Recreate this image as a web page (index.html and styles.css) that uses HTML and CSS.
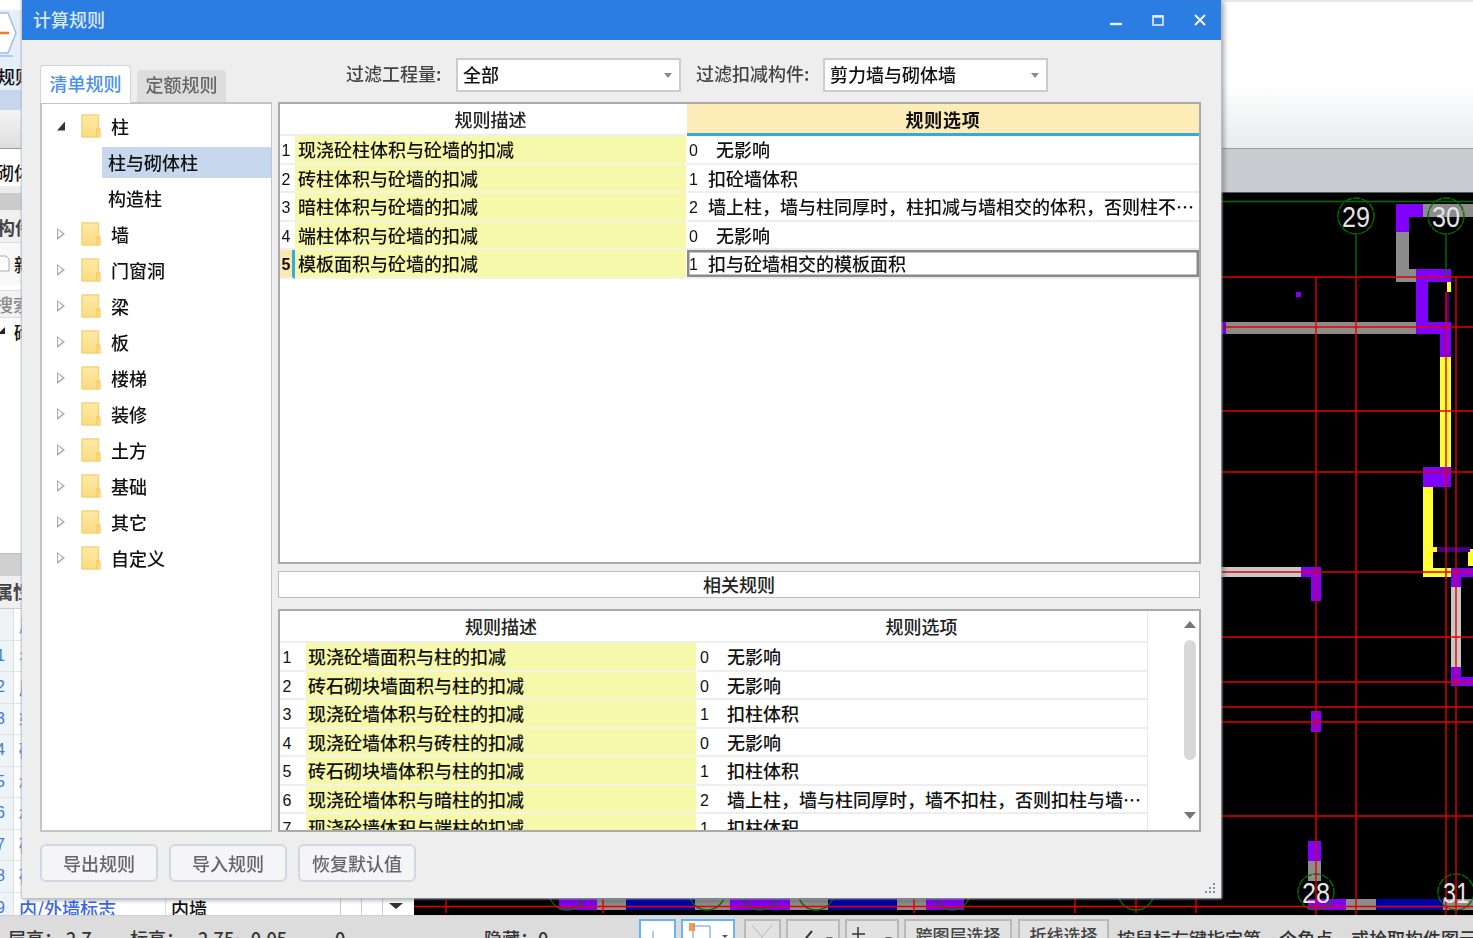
FILE: index.html
```html
<!DOCTYPE html>
<html lang="zh-CN">
<head>
<meta charset="utf-8">
<title>计算规则</title>
<link rel="stylesheet" href="styles.css">
</head>
<body>
<div class="app">
  <header class="ribbon">
    <div class="rb-left">
      <div class="rb-icon">
        <svg width="22" height="48" viewBox="0 0 22 48"><path d="M-6 3H8L16 23L8 43H-6Z" fill="#fff" stroke="#9cc0e8" stroke-width="1.5"/><path d="M0 23H9" stroke="#f07a2a" stroke-width="2.5"/><path d="M0 46H13" stroke="#9cc0e8" stroke-width="1.5"/></svg>
      </div>
      <div class="rb-label">规则</div>
      <div class="rb-sel"></div>
      <div class="rb-grad"></div>
    </div>
    <div class="rb-right"></div>
  </header>
  <div class="workspace">
    <aside class="leftpane">
      <div class="lp-name">砌体墙</div>
      <div class="lp-band"></div>
      <div class="lp-title">构件列表</div>
      <div class="lp-tool"><svg width="10" height="18" viewBox="0 0 10 18"><path d="M-4 1H6L9 4V16H-4Z" fill="#fff" stroke="#aaa"/></svg><span>新建</span></div>
      <div class="lp-search">搜索构件</div>
      <div class="lp-tree"><i class="lp-tri"></i><span>砌体墙</span></div>
      <div class="lp-band2"></div>
      <div class="lp-title2">属性列表</div>
      <div class="lp-table">
        <div class="lp-row lp-head"><b></b><span>属性名称</span><em>属性值</em></div>
        <div class="lp-row"><b>1</b><span>名称</span><em>QTQ-1</em></div>
        <div class="lp-row"><b>2</b><span>厚度(mm)</span><em>200</em></div>
        <div class="lp-row"><b>3</b><span>轴线距左墙皮距离</span><em>(100)</em></div>
        <div class="lp-row"><b>4</b><span>砌体通长筋</span><em></em></div>
        <div class="lp-row"><b>5</b><span>横向短筋</span><em></em></div>
        <div class="lp-row"><b>6</b><span>材质</span><em>砖</em></div>
        <div class="lp-row"><b>7</b><span>砂浆等级</span><em></em></div>
        <div class="lp-row"><b>8</b><span>砂浆类型</span><em></em></div>
        <div class="lp-row lp-last"><b>9</b><span>内/外墙标志</span><em>内墙</em><u></u><u></u><u class="lp-arrow"></u></div>
      </div>
    </aside>
    <main class="stage">
      <div class="band"></div>
      <svg class="cad" width="1059" height="722" viewBox="414 193 1059 722">
        <rect x="414" y="193" width="1059" height="722" fill="#000"/>
        <g fill="#8c8c8c">
          <rect x="1423" y="204" width="50" height="13"/><rect x="1396" y="232" width="13" height="50"/><rect x="1396" y="269" width="20" height="13"/><rect x="1221" y="322" width="195" height="12"/>
          <rect x="1308" y="861" width="13" height="20"/>
          <rect x="597" y="899" width="29" height="11"/><rect x="695" y="899" width="35" height="11"/><rect x="790" y="899" width="38" height="11"/><rect x="897" y="899" width="29" height="11"/><rect x="1346" y="899" width="30" height="11"/><rect x="1443" y="899" width="30" height="11"/>
        </g>
        <g fill="#c8c8c8">
          <rect x="1221" y="567" width="80" height="10"/><rect x="1451" y="587" width="10" height="80"/>
        </g>
        <g fill="#ffff33">
          <rect x="1440" y="357" width="11" height="110"/><rect x="1447" y="282" width="4" height="10"/>
          <rect x="1423" y="487" width="10" height="90"/><rect x="1423" y="568" width="28" height="9"/><rect x="1433" y="547" width="4" height="5"/><rect x="1468" y="549" width="5" height="17"/>
        </g>
        <g fill="#8000ff">
          <rect x="1396" y="204" width="27" height="13"/><rect x="1396" y="217" width="13" height="15"/><rect x="1416" y="269" width="35" height="13"/><rect x="1416" y="282" width="12" height="52"/><rect x="1416" y="322" width="35" height="12"/><rect x="1440" y="334" width="11" height="23"/><rect x="1221" y="322" width="5" height="12"/><rect x="1296" y="292" width="5" height="5"/>
          <rect x="1423" y="467" width="28" height="20"/><rect x="1451" y="568" width="22" height="9"/><rect x="1451" y="577" width="10" height="10"/><rect x="1451" y="667" width="10" height="19"/><rect x="1461" y="677" width="12" height="9"/>
          <rect x="1301" y="567" width="20" height="10"/><rect x="1311" y="577" width="10" height="24"/><rect x="1311" y="711" width="10" height="21"/><rect x="1308" y="841" width="13" height="20"/>
          <rect x="559" y="899" width="38" height="11"/><rect x="730" y="899" width="60" height="11"/><rect x="926" y="899" width="38" height="11"/><rect x="1308" y="899" width="38" height="11"/>
        </g>
        <g fill="#0000a8">
          <rect x="626" y="899" width="69" height="11"/><rect x="828" y="899" width="69" height="11"/><rect x="1376" y="899" width="67" height="11"/>
        </g>
        <g fill="#400080">
          <rect x="1446" y="292" width="3" height="30"/><rect x="1437" y="547" width="33" height="5"/>
        </g>
        <g stroke="#007000" stroke-width="1.4" fill="none">
          <path d="M1221 201.5H1473M1356 234V277M1446 234V277"/>
          <circle cx="1356" cy="216" r="18" stroke-dasharray="8 1"/><circle cx="1446" cy="216" r="18" stroke-dasharray="8 1"/>
          <circle cx="1316" cy="892" r="18" stroke-dasharray="8 1"/><circle cx="1456" cy="892" r="18" stroke-dasharray="8 1"/>
          <circle cx="567" cy="892" r="18"/><circle cx="707" cy="892" r="18"/><circle cx="760" cy="892" r="18"/><circle cx="816" cy="892" r="18"/><circle cx="952" cy="892" r="18"/><circle cx="1136" cy="892" r="18"/>
        </g>
        <g stroke="#e60000" stroke-width="1.4" fill="none">
          <path d="M1221 277H1473M1221 327H1473M1221 411H1473M1221 472H1473M1221 572H1473M1221 637H1473M1221 682H1473M1221 707H1473M1221 722H1473M1221 816H1473M414 906.5H1473"/>
          <path d="M1316 277V915M1356 277V915M1446 292V915M1456 277V915"/>
          <path d="M446 900V913M603 899V913M914 899V913M1075 899V913M1136 899V913M1196 899V913"/>
        </g>
        <g class="axis">
          <text x="1342" y="227" textLength="28" lengthAdjust="spacingAndGlyphs">29</text>
          <text x="1432" y="227" textLength="28" lengthAdjust="spacingAndGlyphs">30</text>
          <text x="1302" y="903" textLength="28" lengthAdjust="spacingAndGlyphs">28</text>
          <text x="1443" y="903" textLength="26" lengthAdjust="spacingAndGlyphs">31</text>
        </g>
      </svg>
    </main>
  </div>
  <footer class="status">
    <span class="st-a">层高：</span><span class="st-b">2.7</span>
    <span class="st-c">标高：</span><span class="st-d">2.75~-0.05</span>
    <span class="st-e">0</span>
    <span class="st-f">隐藏：0</span>
    <div class="st-btn st-on st-w37"><svg width="33" height="24" viewBox="0 0 33 24"><path d="M12 10V24M12 22H28" stroke="#5a9ae0" fill="none"/></svg></div>
    <div class="st-btn st-on st-w54"><svg width="50" height="24" viewBox="0 0 50 24"><rect x="6" y="2" width="6" height="8" fill="#f59a4a"/><path d="M10 5H27V24" stroke="#5a9ae0" fill="none"/><path d="M10 10V24" stroke="#5a9ae0" fill="none"/><path d="M39 14H45L42 17Z" fill="#555"/></svg></div>
    <div class="st-btn st-w37 st-gap st-first"><svg width="33" height="24" viewBox="0 0 33 24"><path d="M6 4L16 16L26 4M16 16V24" stroke="#b5b5b5" fill="none"/></svg></div>
    <div class="st-btn st-w54 st-gap"><svg width="50" height="24" viewBox="0 0 50 24"><path d="M14 22L24 10" stroke="#333" stroke-width="2" fill="none"/><path d="M38 16H45L41.500 20Z" fill="#666"/></svg></div>
    <div class="st-btn st-w54 st-gap"><svg width="50" height="24" viewBox="0 0 50 24"><path d="M11 6V20M5 13H18" stroke="#333" stroke-width="1.500" fill="none"/><path d="M38 16H45L41.500 20Z" fill="#666"/></svg></div>
    <div class="st-btn st-text st-w108 st-gap">跨图层选择</div>
    <div class="st-btn st-text st-w91 st-gap2">折线选择</div>
    <span class="st-msg">按鼠标左键指定第一个角点，或拾取构件图元</span>
  </footer>

  <section class="dialog">
    <div class="titlebar">
      <span class="title">计算规则</span>
      <div class="winctl">
        <svg width="14" height="14" viewBox="0 0 14 14"><path d="M1 11H13" stroke="#e8f1fc" stroke-width="2.400"/></svg>
        <svg width="14" height="14" viewBox="0 0 14 14"><path d="M2 3H12V12H2Z" stroke="#e8f1fc" stroke-width="1.600" fill="none"/><path d="M2 3.500H12" stroke="#e8f1fc" stroke-width="2.400"/></svg>
        <svg width="14" height="14" viewBox="0 0 14 14"><path d="M2 2L12 12M12 2L2 12" stroke="#f0f5fd" stroke-width="2"/></svg>
      </div>
    </div>
    <div class="dlg-body">
      <div class="dlg-main">
        <div class="tabs">
          <div class="tab tab-on">清单规则</div>
          <div class="tab">定额规则</div>
        </div>
        <div class="filters">
          <label class="f-label f-l1">过滤工程量:</label>
          <div class="select"><span>全部</span><i class="caret"></i></div>
          <label class="f-label f-l2">过滤扣减构件:</label>
          <div class="select"><span>剪力墙与砌体墙</span><i class="caret"></i></div>
        </div>
        <nav class="tree">
          <div class="node"><i class="tw tw-open"></i><svg class="folder" width="20" height="24" viewBox="0 0 20 24"><use href="#fd"/></svg><span>柱</span></div>
          <div class="leaf leaf-on">柱与砌体柱</div>
          <div class="leaf">构造柱</div>
          <div class="node"><i class="tw"></i><svg class="folder" width="20" height="24" viewBox="0 0 20 24"><use href="#fd"/></svg><span>墙</span></div>
          <div class="node"><i class="tw"></i><svg class="folder" width="20" height="24" viewBox="0 0 20 24"><use href="#fd"/></svg><span>门窗洞</span></div>
          <div class="node"><i class="tw"></i><svg class="folder" width="20" height="24" viewBox="0 0 20 24"><use href="#fd"/></svg><span>梁</span></div>
          <div class="node"><i class="tw"></i><svg class="folder" width="20" height="24" viewBox="0 0 20 24"><use href="#fd"/></svg><span>板</span></div>
          <div class="node"><i class="tw"></i><svg class="folder" width="20" height="24" viewBox="0 0 20 24"><use href="#fd"/></svg><span>楼梯</span></div>
          <div class="node"><i class="tw"></i><svg class="folder" width="20" height="24" viewBox="0 0 20 24"><use href="#fd"/></svg><span>装修</span></div>
          <div class="node"><i class="tw"></i><svg class="folder" width="20" height="24" viewBox="0 0 20 24"><use href="#fd"/></svg><span>土方</span></div>
          <div class="node"><i class="tw"></i><svg class="folder" width="20" height="24" viewBox="0 0 20 24"><use href="#fd"/></svg><span>基础</span></div>
          <div class="node"><i class="tw"></i><svg class="folder" width="20" height="24" viewBox="0 0 20 24"><use href="#fd"/></svg><span>其它</span></div>
          <div class="node"><i class="tw"></i><svg class="folder" width="20" height="24" viewBox="0 0 20 24"><use href="#fd"/></svg><span>自定义</span></div>
        </nav>
        <div class="rightcol">
          <div class="grid1">
            <div class="c hd"></div><div class="c hd">规则描述</div><div class="c hd hd-on">规则选项</div>
            <div class="c n">1</div><div class="c d">现浇砼柱体积与砼墙的扣减</div><div class="c o"><b>0</b><span class="w">无影响</span></div>
            <div class="c n">2</div><div class="c d">砖柱体积与砼墙的扣减</div><div class="c o"><b>1</b><span>扣砼墙体积</span></div>
            <div class="c n">3</div><div class="c d">暗柱体积与砼墙的扣减</div><div class="c o"><b>2</b><span>墙上柱，墙与柱同厚时，柱扣减与墙相交的体积，否则柱不…</span></div>
            <div class="c n">4</div><div class="c d">端柱体积与砼墙的扣减</div><div class="c o"><b>0</b><span class="w">无影响</span></div>
            <div class="c n n-on">5</div><div class="c d">模板面积与砼墙的扣减</div><div class="c o o-on"><b>1</b><span>扣与砼墙相交的模板面积</span></div>
          </div>
          <div class="relbar">相关规则</div>
          <div class="grid2">
            <div class="g2-tbl">
              <div class="c hd"></div><div class="c hd">规则描述</div><div class="c hd">规则选项</div>
              <div class="c n2">1</div><div class="c d">现浇砼墙面积与柱的扣减</div><div class="c o"><b>0</b><span class="w">无影响</span></div>
              <div class="c n2">2</div><div class="c d">砖石砌块墙面积与柱的扣减</div><div class="c o"><b>0</b><span class="w">无影响</span></div>
              <div class="c n2">3</div><div class="c d">现浇砼墙体积与砼柱的扣减</div><div class="c o"><b>1</b><span class="w">扣柱体积</span></div>
              <div class="c n2">4</div><div class="c d">现浇砼墙体积与砖柱的扣减</div><div class="c o"><b>0</b><span class="w">无影响</span></div>
              <div class="c n2">5</div><div class="c d">砖石砌块墙体积与柱的扣减</div><div class="c o"><b>1</b><span class="w">扣柱体积</span></div>
              <div class="c n2">6</div><div class="c d">现浇砼墙体积与暗柱的扣减</div><div class="c o"><b>2</b><span class="w">墙上柱，墙与柱同厚时，墙不扣柱，否则扣柱与墙…</span></div>
              <div class="c n2">7</div><div class="c d">现浇砼墙体积与端柱的扣减</div><div class="c o"><b>1</b><span class="w">扣柱体积</span></div>
            </div>
            <div class="scroll">
              <i class="sb-up"></i>
              <i class="sb-thumb"></i>
              <i class="sb-down"></i>
            </div>
          </div>
        </div>
      </div>
      <div class="actions">
        <button class="btn">导出规则</button>
        <button class="btn">导入规则</button>
        <button class="btn">恢复默认值</button>
      </div>
    </div>
    <svg class="grip" width="12" height="12" viewBox="0 0 12 12"><path d="M9 1h2v2H9zM5 5h2v2H5zM9 5h2v2H9zM1 9h2v2H1zM5 9h2v2H5zM9 9h2v2H9z" fill="#8a9098"/></svg>
  </section>
</div>
<svg class="defs" width="0" height="0">
  <defs>
    <linearGradient id="fg" x1="0" y1="0" x2="0" y2="1"><stop offset="0" stop-color="#ffe9a6"/><stop offset="1" stop-color="#fddc80"/></linearGradient>
    <g id="fd"><path d="M1 1H17.500V16H19V23H1Z" fill="url(#fg)" stroke="#f5d377" stroke-width="1.500"/><path d="M16 23V15H19" fill="none" stroke="#f3cd6a" stroke-width="1.500"/></g>
  </defs>
</svg>
</body>
</html>
```
FILE: styles.css
```css
* { box-sizing: border-box; }
html, body { margin: 0; padding: 0; }
body {
  width: 1473px;
  height: 938px;
  overflow: hidden;
  font-family: "Noto Sans CJK SC", "Liberation Sans", sans-serif;
  font-size: 18px;
  font-weight: 500;
  color: #111;
  background: #fff;
}
.defs { position: absolute; }
.app {
  position: relative;
  width: 1473px;
  height: 938px;
  overflow: hidden;
  filter: blur(0.4px);
  display: grid;
  grid-template-rows: 149px 766px 23px;
}

/* ribbon */
.ribbon { display: flex; border-bottom: 1px solid #9a9a9a; }
.rb-left { width: 414px; display: flex; flex-direction: column; background: #fff; }
.rb-icon { height: 60px; padding-top: 10px; background: linear-gradient(#fff 10px, #e6eef9 10px); }
.rb-label { height: 30px; line-height: 32px; margin-left: -3px; background: #e6eef9; }
.rb-sel { height: 20px; background: #c6d6ec; }
.rb-grad { flex: 1; background: linear-gradient(#f4f4f4, #dedede); }
.rb-right {
  flex: 1;
  border-top: 2px solid #e6e6e6;
  background: linear-gradient(#fff 55%, #e9ebed);
}

/* workspace */
.workspace { display: flex; min-height: 0; }
.leftpane {
  width: 414px;
  background: #fff;
  display: flex;
  flex-direction: column;
  overflow: hidden;
}
.lp-name { height: 31px; margin-top: 6px; flex: none; line-height: 34px; margin-left: -4px; background: #fff; }
.lp-band { height: 24px; flex: none; background: linear-gradient(#ececec 0 7px, #cbcbcb 7px); }
.lp-title { height: 33px; flex: none; line-height: 34px; margin-left: -3px; font-weight: 700; color: #444; background: #f0f0f0; border-bottom: 1px solid #ddd; }
.lp-tool { height: 42px; flex: none; display: flex; align-items: center; gap: 4px; background: #f8f8f8; }
.lp-search { height: 28px; flex: none; margin-top: 5px; line-height: 26px; margin-left: -5px; color: #888; background: #f2f2f2; border-top: 1px solid #ddd; border-bottom: 1px solid #ddd; }
.lp-tree { height: 235px; flex: none; display: flex; align-items: flex-start; padding-top: 1px; gap: 9px; line-height: 26px; }
.lp-tri { width: 0; height: 0; margin-top: 8px; border-style: solid; border-width: 0 0 7px 7px; border-color: transparent transparent #222 transparent; margin-left: -2px; }
.lp-band2 { height: 23px; flex: none; background: #cfcfcf; border-top: 1px solid #bbb; }
.lp-title2 { height: 33px; flex: none; line-height: 30px; margin-left: -5px; font-weight: 700; background: #f0f0f0; border-bottom: 1px solid #ccc; color: #444; }
.lp-table { display: flex; flex-direction: column; }
.lp-row {
  height: 31.500px;
  flex: none;
  display: flex;
  align-items: center;
  border-bottom: 1px solid #e1e1e1;
}
.lp-row b { width: 14px; font: 400 16px "Liberation Sans", sans-serif; color: #3a7bd5; background: #eef3f8; align-self: stretch; line-height: 30px; border-right: 1px solid #ddd; text-indent: -4px; overflow: hidden; }
.lp-row span { width: 151px; padding-left: 5px; color: #3a66ee; white-space: nowrap; overflow: hidden; }
.lp-row em { font-style: normal; width: 175px; padding-left: 5px; align-self: stretch; line-height: 30px; border-left: 1px solid #ddd; }
.lp-last u { width: 21px; align-self: stretch; border-left: 1px solid #ccc; }
.lp-last .lp-arrow { flex: 1; position: relative; }
.lp-last .lp-arrow::after { content: ""; position: absolute; left: 6px; top: 10px; border-style: solid; border-width: 6px 7px 0; border-color: #333 transparent transparent; }

.stage { flex: 1; display: flex; flex-direction: column; min-width: 0; }
.band { height: 44px; background: #c8cbd0; border-bottom: 1px solid #55585c; flex: none; }
.cad { display: block; flex: none; }
.axis text { font: 30px "Liberation Sans", sans-serif; fill: #e4e4e4; }

/* status */
.status {
  display: flex;
  align-items: flex-start;
  background: #dcdcdc;
  border-top: 1px solid #cfcfcf;
  white-space: nowrap;
  overflow: hidden;
  padding-top: 3px;
  color: #333;
}
.status > span { margin-top: 6px; line-height: 26px; flex: none; }
.st-a { margin-left: 8px; width: 58px; }
.st-b { width: 64px; }
.st-c { width: 68px; }
.st-d { width: 137px; }
.st-e { width: 149px; }
.st-f { width: 155px; }
.st-btn { height: 32px; flex: none; border: 2px solid #b9b9b9; background: #e2e2e2; line-height: 28px; text-align: center; }
.st-btn svg { display: block; }
.st-on { border-color: #66b4f2; background: #fff; margin-right: 5px; }
.st-w37 { width: 37px; }
.st-w54 { width: 54px; }
.st-w108 { width: 108px; }
.st-w91 { width: 91px; }
.st-gap { margin-left: 5px; margin-right: 0; }
.st-first { margin-left: 4px; }
.st-gap2 { margin-left: 6px; }
.st-text { font-size: 17px; color: #444; }
.st-msg { margin-left: 8px; }

/* dialog */
.dialog {
  position: absolute;
  left: 22px;
  top: 0;
  width: 1199px;
  height: 898px;
  background: #eee;
  box-shadow: 0 0 2px 1px #b9c0cc, 3px 2px 5px rgba(0, 0, 0, .35);
  display: flex;
  flex-direction: column;
}
.titlebar {
  height: 40px;
  flex: none;
  background: #2b7de1;
  display: flex;
  align-items: center;
  justify-content: space-between;
  padding: 0 14px 0 11px;
}
.title { color: #d9e7f9; padding-bottom: 2px; }
.winctl { display: flex; gap: 28px; }
.winctl svg { display: block; }
.dlg-body { padding: 0 20px 0 18px; }
.dlg-main {
  display: grid;
  grid-template-columns: 232px 923px;
  grid-template-rows: 62px 730px;
  column-gap: 6px;
}
.tabs { display: flex; align-items: flex-end; gap: 6px; }
.tab {
  width: 89px;
  height: 32px;
  line-height: 29px;
  text-align: center;
  background: #ddd;
  color: #666;
  border-radius: 4px 4px 0 0;
}
.tab-on {
  width: 91px;
  height: 38px;
  line-height: 34px;
  margin-bottom: -1px;
  position: relative;
  z-index: 1;
  background: #fff;
  color: #4b90ee;
  border: 1px solid #cfd4dc;
  border-bottom: 0;
}
.filters { display: flex; align-items: flex-start; padding-top: 18px; padding-left: 68px; }
.f-label { line-height: 30px; white-space: nowrap; color: #444; }
.f-l1 { width: 110px; }
.f-l2 { width: 127px; margin-left: 15px; }
.select {
  width: 225px;
  height: 34px;
  background: #fff;
  border: 2px solid #ccc;
  display: flex;
  align-items: center;
  justify-content: space-between;
  padding: 0 7px 3px 5px;
}
.caret { border-style: solid; border-width: 5px 4.500px 0; border-color: #8b8b8b transparent transparent; margin-top: 3px; }
.tree {
  background: #fff;
  border: 2px solid #c2c4c8;
  border-right-width: 1px;
  padding-top: 4px;
}
.node, .leaf { height: 36px; display: flex; align-items: center; }
.tw {
  width: 8px;
  height: 12px;
  margin-left: 15px;
  margin-right: 16px;
  background: linear-gradient(#aaa, #aaa);
  clip-path: polygon(0 0, 100% 50%, 0 100%, 0 85%, 70% 50%, 14% 15%, 14% 85%, 0 85%);
}
.tw-open { height: 9px; background: #333; clip-path: polygon(100% 0, 100% 100%, 0 100%); }
.folder { display: block; flex: none; margin-right: 10px; }
.leaf { margin-left: 60px; padding-left: 6px; }
.leaf-on { height: 31px; margin-top: 3px; margin-bottom: 2px; padding-bottom: 2px; background: #c6d7ee; }

.rightcol { display: flex; flex-direction: column; min-width: 0; }
.grid1 {
  height: 462px;
  flex: none;
  background: #fff;
  border: 2px solid #a8aaae;
  display: grid;
  grid-template-columns: 15px 391px 1fr;
  grid-template-rows: 32px repeat(5, 28.500px);
  align-content: start;
}
.c {
  min-width: 0;
  white-space: nowrap;
  overflow: hidden;
  border-bottom: 2px solid #eee;
  line-height: 26px;
}
.hd { text-align: center; line-height: 30px; border-bottom-width: 2px; color: #222; }
.hd-on { background: #fdebb8; border-bottom: 3px solid #36a9d9; font-weight: 700; margin-left: 1px; color: #111; letter-spacing: .8px; }
.n { font: 16px/29px "Liberation Sans", sans-serif; text-align: center; padding-right: 3px; }
.n-on { background: #fde8b4; border-right: 3px solid #36a9d9; font-weight: 700; padding-right: 0; }
.d { background: #f6f9a9; padding-left: 3px; border-bottom-color: #f4f4e4; }
.o { padding-left: 2px; margin-left: 1px; display: flex; }
.o b { font: 400 16px/29px "Liberation Sans", sans-serif; width: 10px; flex: none; }
.o span { margin-left: 9px; }
.o span.w { margin-left: 17px; }
.o-on { box-shadow: inset 0 0 0 2.500px #8a8a8a; }
.relbar {
  height: 27px;
  width: 922px;
  flex: none;
  margin-top: 7px;
  background: #fff;
  border: 1.500px solid #bcbcbc;
  text-align: center;
  line-height: 24px;
  color: #222;
}
.grid2 {
  height: 223px;
  flex: none;
  margin-top: 11px;
  background: #fff;
  border: 2px solid #a8aaae;
  display: flex;
  overflow: hidden;
}
.g2-tbl {
  width: 867px;
  flex: none;
  display: grid;
  grid-template-columns: 26px 390px 451px;
  grid-template-rows: 32px repeat(7, 28.500px);
  align-content: start;
}
.g2-tbl .d { padding-left: 2px; }
.g2-tbl .o { padding-left: 3px; }
.n2 { font: 16px/29px "Liberation Sans", sans-serif; padding-right: 12px; text-align: center; }
.scroll {
  flex: 1;
  border-left: 1px solid #e8e8e8;
  display: flex;
  flex-direction: column;
  align-items: flex-start;
  padding-left: 36px;
}
.sb-up, .sb-down { width: 0; height: 0; border-style: solid; margin-left: 0; }
.sb-up { margin-top: 10px; border-width: 0 6px 7px; border-color: transparent transparent #74747c; }
.sb-thumb { width: 12px; height: 120px; margin-top: 12px; border-radius: 6px; background: #d8d8d8; }
.sb-down { margin-top: 52px; border-width: 7px 6px 0; border-color: #74747c transparent transparent; }

.actions { display: flex; gap: 11px; margin-top: 12px; }
.btn {
  width: 118px;
  height: 38px;
  padding: 0;
  background: #f5f5f7;
  border: 2px solid #d2d6e2;
  border-radius: 6px;
  font: inherit;
  color: #666;
}
.grip { position: absolute; right: 5px; bottom: 4px; }
```
